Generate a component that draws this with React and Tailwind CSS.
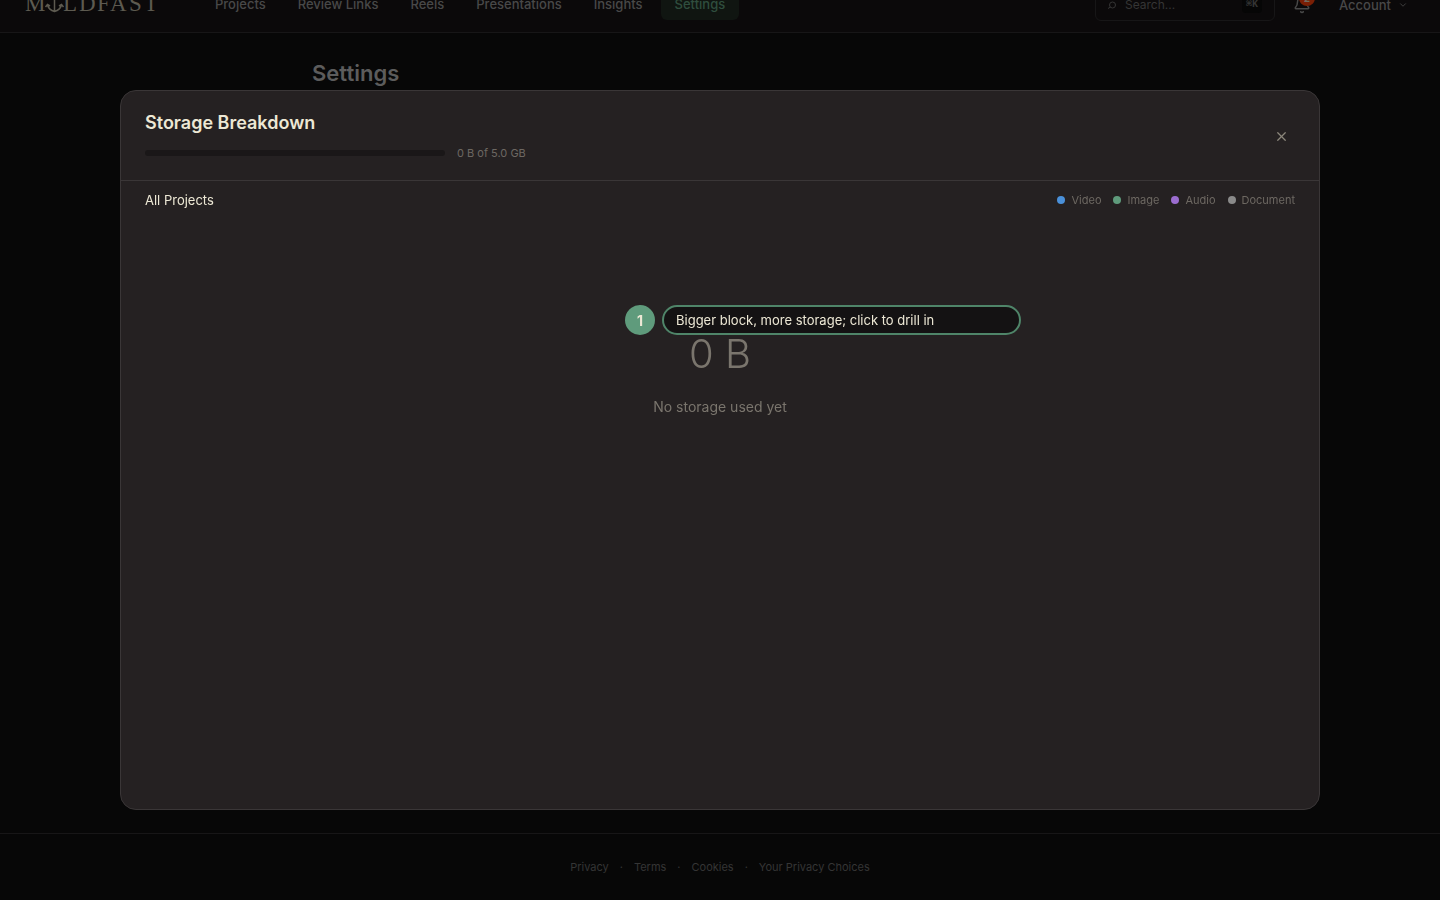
import { ChevronDown, Bell, X } from "lucide-react";

const NAV_LINKS = [
  "Projects",
  "Review Links",
  "Reels",
  "Presentations",
  "Insights",
  "Settings",
];

const FOOTER_LINKS = ["Privacy", "Terms", "Cookies", "Your Privacy Choices"];

const FILE_TYPES = [
  { label: "Video", dot: "bg-[#4a90d9]" },
  { label: "Image", dot: "bg-[#5f9b7c]" },
  { label: "Audio", dot: "bg-[#9b6dd0]" },
  { label: "Document", dot: "bg-[#8a8a8a]" },
];

const Logo = () => (
  <svg width="132" height="32" viewBox="0 0 132 32" className="block" fill="#5d5a50">
    <g fontFamily="'Liberation Serif', serif" fontSize="23">
      <text x="1" y="22">M</text>
      <text x="39" y="22">L</text>
      <text x="55" y="22">D</text>
      <text x="73" y="22">F</text>
      <text x="86" y="22">A</text>
      <text x="105" y="22">S</text>
      <text x="120" y="22">T</text>
    </g>
    {/* anchor standing in for the I */}
    <path
      d="M30.500 7v15M27 9h7M23.500 16c1 3.500 3.500 5.500 7 6.500 3.500-1 6-3 7-6.500M21.500 18l2-2.500 2.500 1.500M39.500 18l-2-2.500-2.500 1.500"
      fill="none"
      stroke="#5d5a50"
      strokeWidth="1.500"
    />
  </svg>
);

const SearchIcon = () => (
  <svg width="10" height="10" viewBox="0 0 10 10" fill="none" stroke="currentColor">
    <circle cx="5.500" cy="5" r="3" />
    <path d="M3.500 7L1 8.500" />
  </svg>
);

const Header = () => (
  <header className="flex h-[33px] items-end overflow-hidden border-b border-[#171617] bg-[#0b090a] pb-[11px] pl-6 pr-8">
    <a href="#home" aria-label="Mildfast" className="mr-[45px] shrink-0">
      <Logo />
    </a>
    <nav className="mb-px flex gap-1">
      {NAV_LINKS.map((link) => (
        <a
          key={link}
          href="#nav"
          className={
            link === "Settings"
              ? "rounded-md bg-[#101511] px-[14px] py-1.5 text-[13px] font-medium leading-5 text-[#2f4e3e]"
              : "rounded-md px-[14px] py-1.5 text-[13px] font-medium leading-5 text-[#484848]"
          }
        >
          {link}
        </a>
      ))}
    </nav>
    <div className="ml-auto flex h-8 items-center">
      <label className="flex h-8 w-[180px] items-center gap-2 rounded-md border border-[#171617] pl-[11px] pr-3 text-[12px] text-[#353535]">
        <SearchIcon />
        <input
          type="text"
          aria-label="Search"
          placeholder="Search..."
          className="min-w-0 flex-1 bg-transparent outline-none placeholder:text-[#353535]"
        />
        <kbd className="rounded-sm bg-[#060606] px-1 font-['Liberation_Mono',monospace] text-[10px] font-bold leading-4">
          ⌘K
        </kbd>
      </label>
      <button type="button" aria-label="Notifications, 2 unread" className="relative ml-[18px]">
        <Bell size={18} className="text-[#484848]" />
        <span className="absolute -right-1 -top-1.5 flex size-4 items-center justify-center rounded-full bg-[#7a1f05] text-[10px] font-bold text-[#6f6a5f]">
          2
        </span>
      </button>
      <button
        type="button"
        className="ml-7 flex items-center gap-[7px] text-[13px] font-medium leading-5 text-[#484848]"
      >
        Account
        <ChevronDown size={10} />
      </button>
    </div>
  </header>
);

const Footer = () => (
  <footer className="flex justify-center gap-[11px] border-t border-[#171617] py-6 text-[11px] leading-[18px] text-[#353535]">
    {FOOTER_LINKS.map((link, index) => (
      <span key={link} className="flex gap-[11px]">
        {index > 0 && <span>·</span>}
        <a href="#legal">{link}</a>
      </span>
    ))}
  </footer>
);

const Callout = ({ step, children }) => (
  <div className="absolute left-1/2 top-[86px] -ml-[95px] flex gap-[7px]">
    <span className="flex size-[30px] items-center justify-center rounded-full bg-[#5f9b7c] text-[14px] font-bold text-[#ede8d5]">
      {step}
    </span>
    <p className="w-[359px] rounded-full border-2 border-[#4f8569] bg-[#141213] px-3 text-[13px] leading-[26px] text-[#ede8d5]">
      {children}
    </p>
  </div>
);

const StorageDialog = () => (
  <section
    role="dialog"
    aria-labelledby="storage-title"
    className="flex h-[80vh] w-full max-w-[1200px] flex-col rounded-2xl border border-[#3a3637] bg-[#252122]"
  >
    <div className="flex items-center justify-between border-b border-[#3a3637] px-6 pb-[19px] pt-5">
      <div>
        <h2 id="storage-title" className="text-[18px] font-semibold leading-6 text-[#ede8d5]">
          Storage Breakdown
        </h2>
        <div className="mt-2.5 flex items-center gap-3">
          <div className="h-1.5 w-[300px] rounded-full bg-[#1a1718]" />
          <span className="text-[11px] leading-4 text-[#6d6862]">0 B of 5.0 GB</span>
        </div>
      </div>
      <button type="button" aria-label="Close" className="p-1.5 text-[#8b867b]">
        <X size={15} />
      </button>
    </div>
    <div className="flex items-center justify-between px-6 py-2.5">
      <span className="text-[13px] leading-[18px] text-[#ede8d5]">All Projects</span>
      <ul className="flex gap-3">
        {FILE_TYPES.map(({ label, dot }) => (
          <li key={label} className="flex items-center gap-1.5 text-[11px] leading-[18px] text-[#6d6862]">
            <span className={`size-2 rounded-full ${dot}`} />
            {label}
          </li>
        ))}
      </ul>
    </div>
    <div className="relative flex flex-col items-center pt-[105px] text-[#7a756d]">
      <p className="text-[40px] font-light leading-[60px]">0 B</p>
      <p className="mt-[13px] text-[14px] leading-5">No storage used yet</p>
      <Callout step={1}>Bigger block, more storage; click to drill in</Callout>
    </div>
  </section>
);

export default function App() {
  return (
    <div className="flex min-h-screen flex-col bg-[#070707] font-['Inter',sans-serif]">
      <Header />
      <main className="mx-auto w-full max-w-[816px] flex-1 pt-6">
        <h1 className="text-[22px] font-semibold leading-8 text-[#5c5c5c]">Settings</h1>
      </main>
      <Footer />
      <div className="fixed inset-0 flex items-center justify-center">
        <StorageDialog />
      </div>
    </div>
  );
}
